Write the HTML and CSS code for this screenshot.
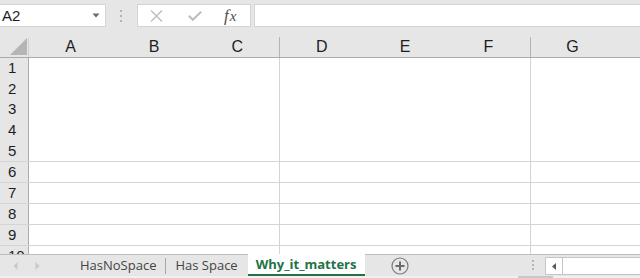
FILE: index.html
```html
<!DOCTYPE html>
<html>
<head>
<meta charset="utf-8">
<link rel="stylesheet" href="styles.css">
</head>
<body>
<div class="app">
  <div class="toolbar">
    <div class="namebox">
      <span class="nb-text">A2</span>
      <svg class="nb-arrow" width="8" height="5" viewBox="0 0 8 5"><path d="M0.5 0.5 L7.5 0.5 L4 4.5 Z" fill="#6a6a6a"/></svg>
    </div>
    <div class="grip">
      <svg width="3" height="12" viewBox="0 0 3 12"><rect x="0" y="0" width="2" height="2" fill="#b4b4b4"/><rect x="0" y="5" width="2" height="2" fill="#b4b4b4"/><rect x="0" y="10" width="2" height="2" fill="#b4b4b4"/></svg>
    </div>
    <div class="fxbox">
      <svg class="ico-x" width="13" height="12" viewBox="0 0 13 12"><path d="M1 0.5 L12 11.5 M12 0.5 L1 11.5" stroke="#bcbcbc" stroke-width="1.4" fill="none"/></svg>
      <svg class="ico-check" width="14" height="10" viewBox="0 0 14 10"><path d="M0.8 4.8 L4.8 8.8 L13.2 0.8" stroke="#bcbcbc" stroke-width="2" fill="none"/></svg>
      <span class="fx"><i>f</i><i class="x">x</i></span>
    </div>
    <div class="formula"></div>
  </div>

  <div class="colhead">
    <div class="corner">
      <svg width="18" height="17" viewBox="0 0 18 17"><path d="M17 0 L17 17 L0 17 Z" fill="#b5b5b5"/></svg>
    </div>
    <div class="cgroup"><span>A</span><span>B</span><span>C</span></div>
    <div class="cgroup"><span>D</span><span>E</span><span>F</span></div>
    <div class="cgroup last"><span>G</span><span></span><span></span></div>
  </div>

  <div class="sheet">
    <div class="row block">
      <div class="rh stack"><span>1</span><span>2</span><span>3</span><span>4</span><span>5</span></div>
      <div class="cell"></div><div class="cell"></div><div class="cell last"></div>
    </div>
    <div class="row"><div class="rh">6</div><div class="cell"></div><div class="cell"></div><div class="cell last"></div></div>
    <div class="row"><div class="rh">7</div><div class="cell"></div><div class="cell"></div><div class="cell last"></div></div>
    <div class="row"><div class="rh">8</div><div class="cell"></div><div class="cell"></div><div class="cell last"></div></div>
    <div class="row"><div class="rh">9</div><div class="cell"></div><div class="cell"></div><div class="cell last"></div></div>
    <div class="row"><div class="rh">10</div><div class="cell"></div><div class="cell"></div><div class="cell last"></div></div>
  </div>

  <div class="tabbar">
    <div class="nav">
      <svg width="5" height="8" viewBox="0 0 5 8"><path d="M4.5 0 L4.5 8 L0.5 4 Z" fill="#c8c8c8"/></svg>
      <svg width="5" height="8" viewBox="0 0 5 8"><path d="M0.5 0 L0.5 8 L4.5 4 Z" fill="#c8c8c8"/></svg>
    </div>
    <div class="tab">HasNoSpace</div>
    <div class="tab sep">Has Space</div>
    <div class="tab active">Why_it_matters</div>
    <div class="add">
      <svg width="18" height="18" viewBox="0 0 18 18"><circle cx="9" cy="9" r="8" fill="none" stroke="#7a7a7a" stroke-width="1.2"/><path d="M9 4.5 V13.5 M4.5 9 H13.5" stroke="#6a6a6a" stroke-width="2"/></svg>
    </div>
    <div class="spacer"></div>
    <div class="grip2">
      <svg width="3" height="11" viewBox="0 0 3 11"><rect x="0" y="0" width="2" height="2" fill="#b4b4b4"/><rect x="0" y="4" width="2" height="2" fill="#b4b4b4"/><rect x="0" y="8" width="2" height="2" fill="#b4b4b4"/></svg>
    </div>
    <div class="hscroll">
      <div class="hs-btn"><svg width="4" height="7" viewBox="0 0 4 7"><path d="M4 0 L4 7 L0 3.5 Z" fill="#5a5a5a"/></svg></div>
    </div>
  </div>
  <div class="bottomstrip"><div class="thumb"></div></div>
</div>
</body>
</html>
```

FILE: styles.css
```css
* { box-sizing: border-box; }
html, body { margin: 0; padding: 0; }
body {
  width: 640px;
  height: 278px;
  overflow: hidden;
  background: #e6e6e6;
  font-family: "Liberation Sans", Arial, sans-serif;
  color: #1e1e1e;
}
.app { width: 640px; height: 278px; display: flex; flex-direction: column; }

/* toolbar */
.toolbar {
  height: 36px;
  flex: none;
  display: flex;
  align-items: flex-start;
  padding-top: 4px;
}
.namebox {
  width: 106px;
  height: 23px;
  background: #fff;
  border: 1px solid #d4d4d4;
  border-left: none;
  display: flex;
  align-items: center;
  justify-content: space-between;
  padding: 0 5px 0 2px;
  font-size: 15px;
}
.nb-text { line-height: 1; }
.grip { width: 31px; height: 23px; display: flex; align-items: center; justify-content: center; }
.fxbox {
  width: 114px;
  height: 23px;
  background: #fff;
  border: 1px solid #d4d4d4;
  display: flex;
  align-items: center;
  padding-left: 12px;
}
.ico-x { margin-right: 25px; }
.ico-check { margin-right: 22px; }
.fx {
  font-family: "Liberation Serif", "Times New Roman", serif;
  font-size: 17px;
  color: #505050;
  line-height: 1;
  margin-top: -1px;
}
.fx .x { font-size: 15px; margin-left: 1px; }
.formula {
  flex: 1;
  height: 23px;
  margin-left: 3px;
  background: #fff;
  border: 1px solid #d4d4d4;
  border-right: none;
}

/* column header */
.colhead {
  height: 22px;
  flex: none;
  display: grid;
  grid-template-columns: 29px 251px 251px 1fr;
  border-bottom: 1px solid #ababab;
  font-size: 16px;
}
.corner {
  border-right: 1px solid #d0d0d0;
  margin-top: 2px;
  display: flex;
  align-items: flex-start;
  justify-content: flex-end;
}
.corner svg { display: block; }
.cgroup {
  display: grid;
  grid-template-columns: 1fr 1fr 1fr;
  align-items: center;
  text-align: center;
  border-right: 1px solid #b4b4b4;
  margin-top: 1px;
  padding-bottom: 1px;
}
.cgroup span { line-height: 1; }
.cgroup.last { border-right: none; grid-template-columns: 83px 1fr 1fr; }

/* sheet */
.sheet {
  height: 196px;
  flex: none;
  overflow: hidden;
  background: #fff;
}
.row {
  display: grid;
  grid-template-columns: 29px 251px 251px 1fr;
  height: 21px;
  border-bottom: 1px solid #d4d4d4;
}
.row.block { height: 104px; }
.rh {
  background: #e6e6e6;
  border-right: 1px solid #ababab;
  font-size: 15px;
  line-height: 20px;
  padding-left: 8px;
}
.rh.stack { display: flex; flex-direction: column; }
.rh.stack span { flex: 1; display: flex; align-items: center; }
.cell { border-right: 1px solid #d4d4d4; }
.cell.last { border-right: none; }

/* tab bar */
.tabbar {
  height: 22px;
  flex: none;
  display: flex;
  align-items: stretch;
  border-top: 1px solid #bdbdbd;
  font-family: "Open Sans", "Noto Sans", sans-serif;
  font-size: 13px;
  color: #444;
}
.nav {
  width: 70px;
  display: flex;
  align-items: center;
  padding-left: 13px;
  gap: 17px;
}
.tab {
  display: flex;
  align-items: center;
  padding: 0 10px;
  line-height: 1;
}
.tab.sep { position: relative; padding: 0 10px 0 9px; }
.tab.sep::before {
  content: "";
  position: absolute;
  left: -1px;
  top: 3px;
  bottom: 2px;
  border-left: 1px solid #a8a8a8;
}
.tab.active {
  background: #fff;
  color: #217346;
  font-weight: bold;
  padding: 0 9px 0 8px;
  margin-top: -1px;
  border-bottom: 2px solid #217346;
}
.add {
  display: flex;
  align-items: center;
  padding-left: 26px;
}
.spacer { flex: 1; }
.grip2 { display: flex; align-items: center; width: 13px; }
.hscroll {
  width: 95px;
  margin: 2px 0 1px 0;
  background: #fff;
  border: 1px solid #c6c6c6;
  border-right: none;
  display: flex;
}
.hs-btn {
  width: 17px;
  border-right: 1px solid #c6c6c6;
  display: flex;
  align-items: center;
  justify-content: center;
}
.bottomstrip {
  flex: 1;
  background: #f0f0f0;
  position: relative;
}
.thumb {
  position: absolute;
  left: 518px;
  top: 0;
  width: 35px;
  height: 100%;
  background: #c8c8c8;
}
```
